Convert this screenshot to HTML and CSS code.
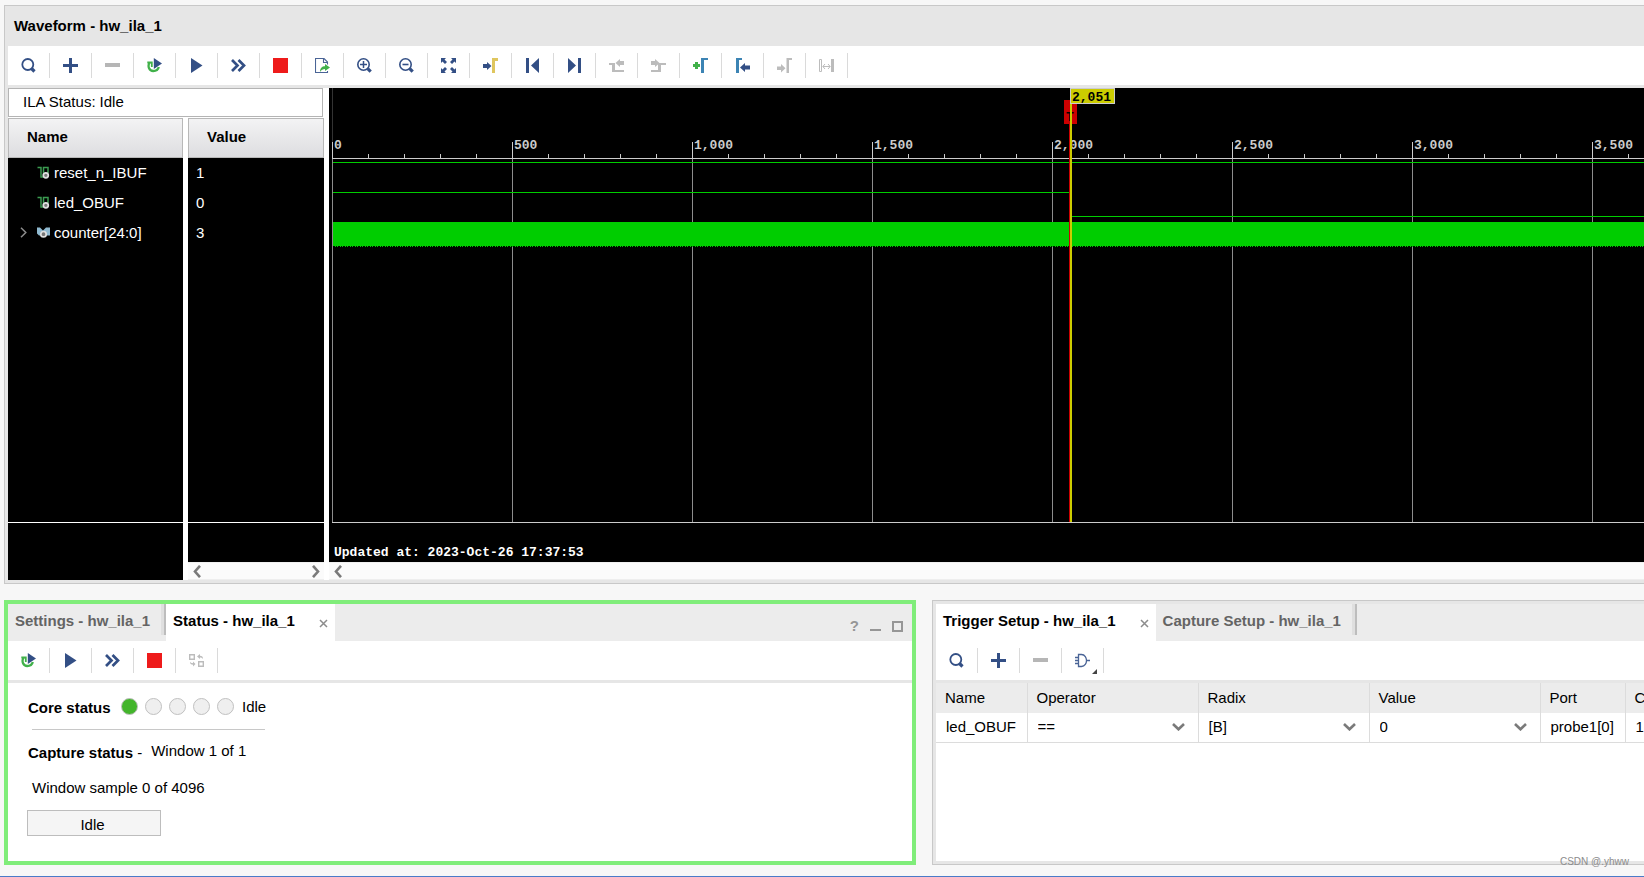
FILE: index.html
```html
<!DOCTYPE html>
<html lang="en">
<head>
<meta charset="utf-8">
<title>Hardware Manager - hw_ila_1</title>
<link rel="stylesheet" href="styles.css">
</head>
<body>
<svg class="defs" aria-hidden="true">
  <symbol id="i-search" viewBox="0 0 15 15"><circle cx="6.8" cy="6.5" r="5.5" fill="none" stroke="#334f85" stroke-width="1.8"/><path d="M10.5 10.5l3 3" stroke="#334f85" stroke-width="3.2"/></symbol>
  <symbol id="i-plus" viewBox="0 0 15 15"><path d="M0 6h15v3H0zM6 0h3v15H6z" fill="#334f85"/></symbol>
  <symbol id="i-minus" viewBox="0 0 15 15"><path d="M0 5h15v4H0z" fill="#b6b6b6"/></symbol>
  <symbol id="i-rerun" viewBox="0 0 15 15"><path d="M2.500 4.500C0.300 8.500 2.300 13 6.200 13c3 0 5-1.500 5.600-4" fill="none" stroke="#41b14a" stroke-width="2.300"/><path d="M0.300 4.500H4.800V9" fill="none" stroke="#41b14a" stroke-width="1.800"/><path d="M6.800 0L15 5.500L6.800 11z" fill="#334f85"/></symbol>
  <symbol id="i-play" viewBox="0 0 15 15"><path d="M2 0L13.500 7.500L2 15z" fill="#334f85"/></symbol>
  <symbol id="i-ff" viewBox="0 0 15 15"><path d="M1 2l5.500 5.500L1 13M7.500 2L13 7.500L7.500 13" fill="none" stroke="#334f85" stroke-width="2.700"/></symbol>
  <symbol id="i-stop" viewBox="0 0 15 15"><path d="M0 0h15v15H0z" fill="#ee1b1b"/></symbol>
  <symbol id="i-export" viewBox="0 0 15 15"><path d="M12.500 6.500V4L9 .5H.5V14.500H12.500V13M8.500 .5V4.500H12.500" fill="none" stroke="#4a6496" stroke-width="1.100"/><path d="M5 14c0-4 2-5.800 5-5.800V6L15 9.500L10 13V11c-2 0-3.500.7-5 3z" fill="#41b14a"/></symbol>
  <symbol id="i-zin" viewBox="0 0 15 15"><circle cx="6.500" cy="6.500" r="5.700" fill="none" stroke="#334f85" stroke-width="1.600"/><path d="M3 6.500h7M6.500 3v7" stroke="#334f85" stroke-width="1.500"/><path d="M10.700 10.700l3 3" stroke="#334f85" stroke-width="3.200"/></symbol>
  <symbol id="i-zout" viewBox="0 0 15 15"><circle cx="6.500" cy="6.500" r="5.700" fill="none" stroke="#334f85" stroke-width="1.600"/><path d="M3.500 6.500h6" stroke="#334f85" stroke-width="1.600"/><path d="M10.700 10.700l3 3" stroke="#334f85" stroke-width="3.200"/></symbol>
  <symbol id="i-fit" viewBox="0 0 15 15"><path d="M0 0h5L3.500 1.500L6 4L4 6L1.500 3.500L0 5zM15 0h-5l1.500 1.500L9 4l2 2l2.500-2.500L15 5zM0 15h5l-1.500-1.500L6 11L4 9l-2.500 2.500L0 10zM15 15h-5l1.500-1.500L9 11l2-2l2.500 2.500L15 10z" fill="#334f85"/></symbol>
  <symbol id="i-tocursor" viewBox="0 0 15 15"><path d="M9 0h6v3h-3v12H9z" fill="#dfc65e"/><path d="M0 6h4V4l4.500 4L4 12v-2H0z" fill="#334f85"/></symbol>
  <symbol id="i-first" viewBox="0 0 15 15"><path d="M1 0h3v15H1zM14 0v15L6 7.500z" fill="#334f85"/></symbol>
  <symbol id="i-last" viewBox="0 0 15 15"><path d="M11 0h3v15h-3zM1 0v15l8-7.500z" fill="#334f85"/></symbol>
  <symbol id="i-prevtr" viewBox="0 0 15 15"><path d="M0 5h6v7h9v2H3V7H0zM6.500 5l4.500-4v2h4v4h-4v2z" fill="#bcbcbc"/></symbol>
  <symbol id="i-nexttr" viewBox="0 0 15 15"><path d="M15 5H8.500L4 1v2H0v4h4v2l3-2.600V12H0v2h10V7h5z" fill="#bcbcbc"/></symbol>
  <symbol id="i-addmark" viewBox="0 0 15 15"><path d="M8 0h7v2h-4v13H8z" fill="#3c84b4"/><path d="M0 6h7v3H0zM2 4h3v7H2z" fill="#41b14a"/></symbol>
  <symbol id="i-prevmark" viewBox="0 0 15 15"><path d="M1 0h6v2H4v13H1z" fill="#3c84b4"/><path d="M5 9.500L10 5v2.500h5v4h-5V14z" fill="#334f85"/></symbol>
  <symbol id="i-nextmark" viewBox="0 0 15 15"><path d="M9.500 0H15v2h-3v13H9.500zM0 8.500h4V6l4.500 4.300L4 14.500V12H0z" fill="#bcbcbc"/></symbol>
  <symbol id="i-span" viewBox="0 0 15 15"><path d="M.5 1.500h2v12h-2zM4 8.500h7M6 6L3.800 8.500L6 11M9 6l2.200 2.500L9 11" fill="none" stroke="#bcbcbc"/><path d="M12 1h3v13h-3z" fill="#bcbcbc"/></symbol>
  <symbol id="i-swap" viewBox="0 0 15 15"><path d="M.7 1.700h4.600v4.600H.7zM9.700 8.700h4.600v4.600H9.700z" fill="none" stroke="#bcbcbc" stroke-width="1.400"/><path d="M8 3.500L11 1v1.700c2 0 3 1 3 3.300c-1-1.300-2-1.500-3-1.500V6zM6.500 11L4 13.500v-1.700C2 11.800 1 11 1 8.800c1 1.200 2 1.400 3 1.400V8.500z" fill="#bcbcbc"/></symbol>
  <symbol id="i-gate" viewBox="0 0 15 15"><path d="M3.500 1.500h3c3.500 0 5 3.500 5 6s-1.500 6-5 6h-3zM0 4.500h3M0 7.500h3M0 10.500h3M11.500 7.500H15" fill="none" stroke="#4a6496" stroke-width="1.300"/></symbol>
  <symbol id="i-signal" viewBox="0 0 12 13"><path d="M0 1.500h3.500V11H6V1.500h4.500V7" fill="none" stroke="#3b9a50" stroke-width="1.500"/><circle cx="8.300" cy="9.300" r="2.500" fill="#777" stroke="#e0e0e0" stroke-width="1.700"/></symbol>
  <symbol id="i-bus" viewBox="0 0 13 12"><path d="M0 1h3l3 3l3-3h4v8H2L0 7z" fill="#8fb9d0"/><circle cx="6.500" cy="7.700" r="2.700" fill="#777" stroke="#e0e0e0" stroke-width="1.700"/></symbol>
  <symbol id="i-left" viewBox="0 0 8 13"><path d="M7 .8L2 6.500L7 12.200" fill="none" stroke="#7a7a7a" stroke-width="2.600"/></symbol>
  <symbol id="i-right" viewBox="0 0 8 13"><path d="M1 .8L6 6.500L1 12.200" fill="none" stroke="#7a7a7a" stroke-width="2.600"/></symbol>
  <symbol id="i-down" viewBox="0 0 13 8"><path d="M1 1l5.500 5.300L12 1" fill="none" stroke="#7a7a7a" stroke-width="2.600"/></symbol>
  <symbol id="i-expand" viewBox="0 0 7 11"><path d="M1 .7L5.800 5.500L1 10.300" fill="none" stroke="#8c8c8c" stroke-width="1.500"/></symbol>
  <symbol id="i-close" viewBox="0 0 9 9"><path d="M1 1l7 7M8 1L1 8" stroke="#8c8c8c" stroke-width="1.500"/></symbol>
  <symbol id="i-min" viewBox="0 0 11 11"><path d="M0 8h11v2H0z" fill="#969696"/></symbol>
  <symbol id="i-max" viewBox="0 0 11 11"><path d="M1 1h9v9H1z" fill="none" stroke="#969696" stroke-width="2"/></symbol>
  <symbol id="i-menu" viewBox="0 0 5 5"><path d="M5 0v5H0z" fill="#444"/></symbol>
</svg>

<main class="workspace">
  <section class="panel waveform">
    <h1 class="panel-title">Waveform - hw_ila_1</h1>
    <div class="toolbar" role="toolbar" aria-label="Waveform tools">
      <button class="tool" aria-label="Search"><svg class="icon"><use href="#i-search"/></svg></button>
      <button class="tool" aria-label="Add probe"><svg class="icon"><use href="#i-plus"/></svg></button>
      <button class="tool" aria-label="Remove"><svg class="icon"><use href="#i-minus"/></svg></button>
      <button class="tool" aria-label="Auto re-trigger"><svg class="icon"><use href="#i-rerun"/></svg></button>
      <button class="tool" aria-label="Run trigger"><svg class="icon"><use href="#i-play"/></svg></button>
      <button class="tool" aria-label="Run trigger immediate"><svg class="icon"><use href="#i-ff"/></svg></button>
      <button class="tool" aria-label="Stop trigger"><svg class="icon"><use href="#i-stop"/></svg></button>
      <button class="tool" aria-label="Export data"><svg class="icon"><use href="#i-export"/></svg></button>
      <button class="tool" aria-label="Zoom in"><svg class="icon"><use href="#i-zin"/></svg></button>
      <button class="tool" aria-label="Zoom out"><svg class="icon"><use href="#i-zout"/></svg></button>
      <button class="tool" aria-label="Zoom fit"><svg class="icon"><use href="#i-fit"/></svg></button>
      <button class="tool" aria-label="Go to cursor"><svg class="icon"><use href="#i-tocursor"/></svg></button>
      <button class="tool" aria-label="Go to start"><svg class="icon"><use href="#i-first"/></svg></button>
      <button class="tool" aria-label="Go to end"><svg class="icon"><use href="#i-last"/></svg></button>
      <button class="tool" aria-label="Previous transition"><svg class="icon"><use href="#i-prevtr"/></svg></button>
      <button class="tool" aria-label="Next transition"><svg class="icon"><use href="#i-nexttr"/></svg></button>
      <button class="tool" aria-label="Add marker"><svg class="icon"><use href="#i-addmark"/></svg></button>
      <button class="tool" aria-label="Previous marker"><svg class="icon"><use href="#i-prevmark"/></svg></button>
      <button class="tool" aria-label="Next marker"><svg class="icon"><use href="#i-nextmark"/></svg></button>
      <button class="tool" aria-label="Swap cursors"><svg class="icon"><use href="#i-span"/></svg></button>
    </div>

    <div class="wave-body">
      <div class="signals">
        <div class="ila-status"><span>ILA Status:</span><span>Idle</span></div>
        <div class="columns">
          <div class="column names">
            <h2 class="column-head">Name</h2>
            <ul class="signal-list">
              <li class="signal"><svg class="sig-icon"><use href="#i-signal"/></svg>reset_n_IBUF</li>
              <li class="signal"><svg class="sig-icon"><use href="#i-signal"/></svg>led_OBUF</li>
              <li class="signal expandable"><button class="expander" aria-label="Expand counter"><svg class="chev"><use href="#i-expand"/></svg></button><svg class="sig-icon"><use href="#i-bus"/></svg>counter[24:0]</li>
            </ul>
            <div class="column-foot"></div>
          </div>
          <div class="column values">
            <h2 class="column-head">Value</h2>
            <ul class="signal-list">
              <li class="signal">1</li>
              <li class="signal">0</li>
              <li class="signal">3</li>
            </ul>
            <div class="column-foot"></div>
            <div class="scrollbar">
              <button class="scroll-btn" aria-label="Scroll left"><svg class="scroll-icon"><use href="#i-left"/></svg></button>
              <button class="scroll-btn" aria-label="Scroll right"><svg class="scroll-icon"><use href="#i-right"/></svg></button>
            </div>
          </div>
        </div>
      </div>

      <div class="plot">
        <svg class="plot-canvas" role="img" aria-label="Captured waveforms">
          <defs>
            <pattern id="minor" x="3" y="66" width="36" height="5" patternUnits="userSpaceOnUse"><path d="M0 0h1v5H0z" fill="#ccc"/></pattern>
            <pattern id="major" x="3" y="54" width="180" height="380" patternUnits="userSpaceOnUse"><path d="M0 0h1v17H0z" fill="#ccc"/><path d="M0 17h1v363H0z" fill="#8c8c8c"/></pattern>
            <pattern id="dots" x="3" y="158" width="5" height="1" patternUnits="userSpaceOnUse"><path d="M0 0h1v1H0zM3 0h1v1H3z" fill="#00cd00"/></pattern>
          </defs>
          <rect x="3" width="1" height="54" fill="#333"/>
          <rect x="3" y="54" width="5000" height="380" fill="url(#major)"/>
          <rect x="3" y="66" width="5000" height="4" fill="url(#minor)"/>
          <rect x="3" y="70" width="5000" height="1" fill="#ccc"/>
          <rect x="3" y="434" width="5000" height="1" fill="#ccc"/>
          <g class="ruler">
            <text x="5" y="61">0</text>
            <text x="185" y="61">500</text>
            <text x="365" y="61">1,000</text>
            <text x="545" y="61">1,500</text>
            <text x="725" y="61">2,000</text>
            <text x="905" y="61">2,500</text>
            <text x="1085" y="61">3,000</text>
            <text x="1265" y="61">3,500</text>
          </g>
          <g fill="#00cd00">
            <rect x="4" y="74" width="5000" height="1"/>
            <rect x="4" y="104" width="737" height="1"/>
            <rect x="741" y="128" width="5000" height="1"/>
            <rect x="4" y="134" width="5000" height="24"/>
          </g>
          <rect x="4" y="158" width="5000" height="1" fill="#000"/>
          <rect x="4" y="158" width="5000" height="1" fill="url(#dots)"/>
          <rect x="735" y="12" width="13" height="24" fill="#c00"/>
          <text class="marker" x="737" y="33">T</text>
          <rect x="740" y="36" width="1" height="398" fill="#c00"/>
          <rect x="741" y="16" width="2" height="418" fill="#cc0"/>
          <rect x="741.500" y=".5" width="44" height="15" fill="#cc0" stroke="#ccc"/>
          <text class="marker" x="743" y="13">2,051</text>
          <text class="stamp" x="5" y="468">Updated at: 2023-Oct-26 17:37:53</text>
        </svg>
        <div class="scrollbar">
          <button class="scroll-btn" aria-label="Scroll left"><svg class="scroll-icon"><use href="#i-left"/></svg></button>
        </div>
      </div>
    </div>
  </section>

  <div class="lower">
    <section class="dock focused">
      <div class="tabs" role="tablist">
        <button class="tab" role="tab" aria-selected="false">Settings - hw_ila_1</button>
        <div class="tab-divider"></div>
        <div class="tab active"><button class="tab-label" role="tab" aria-selected="true">Status - hw_ila_1</button><button class="close" aria-label="Close tab"><svg class="close-icon"><use href="#i-close"/></svg></button></div>
        <div class="window-controls">
          <button class="control" aria-label="Help">?</button>
          <button class="control" aria-label="Minimize"><svg class="control-icon"><use href="#i-min"/></svg></button>
          <button class="control" aria-label="Maximize"><svg class="control-icon"><use href="#i-max"/></svg></button>
        </div>
      </div>
      <div class="toolbar ruled" role="toolbar" aria-label="Status tools">
        <button class="tool" aria-label="Auto re-trigger"><svg class="icon"><use href="#i-rerun"/></svg></button>
        <button class="tool" aria-label="Run trigger"><svg class="icon"><use href="#i-play"/></svg></button>
        <button class="tool" aria-label="Run trigger immediate"><svg class="icon"><use href="#i-ff"/></svg></button>
        <button class="tool" aria-label="Stop trigger"><svg class="icon"><use href="#i-stop"/></svg></button>
        <button class="tool" aria-label="Swap"><svg class="icon"><use href="#i-swap"/></svg></button>
      </div>
      <div class="status">
        <div class="core">
          <strong class="core-label">Core status</strong>
          <span class="lamps"><i class="lamp on"></i><i class="lamp"></i><i class="lamp"></i><i class="lamp"></i><i class="lamp"></i></span>
          <span>Idle</span>
        </div>
        <div class="capture">
          <span class="capture-label"><strong>Capture status</strong> -</span>
          <span>Window 1 of 1</span>
        </div>
        <p class="sample">Window sample 0 of 4096</p>
        <div class="progress" role="progressbar" aria-label="Capture progress">Idle</div>
      </div>
    </section>

    <section class="dock trigger">
      <div class="tabs" role="tablist">
        <div class="tab active"><button class="tab-label" role="tab" aria-selected="true">Trigger Setup - hw_ila_1</button><button class="close" aria-label="Close tab"><svg class="close-icon"><use href="#i-close"/></svg></button></div>
        <button class="tab" role="tab" aria-selected="false">Capture Setup - hw_ila_1</button>
        <div class="tab-divider"></div>
      </div>
      <div class="toolbar ruled" role="toolbar" aria-label="Trigger tools">
        <button class="tool" aria-label="Search"><svg class="icon"><use href="#i-search"/></svg></button>
        <button class="tool" aria-label="Add probe"><svg class="icon"><use href="#i-plus"/></svg></button>
        <button class="tool" aria-label="Remove probe"><svg class="icon"><use href="#i-minus"/></svg></button>
        <button class="tool has-menu" aria-label="Trigger condition"><svg class="icon"><use href="#i-gate"/></svg><svg class="menu-mark"><use href="#i-menu"/></svg></button>
      </div>
      <table class="probes">
        <colgroup><col class="c-name"><col class="c-wide"><col class="c-wide"><col class="c-wide"><col class="c-port"><col class="c-comp"></colgroup>
        <thead><tr><th>Name</th><th>Operator</th><th>Radix</th><th>Value</th><th>Port</th><th>C</th></tr></thead>
        <tbody><tr>
          <td>led_OBUF</td>
          <td><div class="combo"><select class="combo-select" aria-label="Operator"><option>==</option></select><svg class="combo-icon"><use href="#i-down"/></svg></div></td>
          <td><div class="combo"><select class="combo-select" aria-label="Radix"><option>[B]</option></select><svg class="combo-icon"><use href="#i-down"/></svg></div></td>
          <td><div class="combo"><select class="combo-select" aria-label="Value"><option>0</option></select><svg class="combo-icon"><use href="#i-down"/></svg></div></td>
          <td>probe1[0]</td>
          <td>1</td>
        </tr></tbody>
      </table>
    </section>
  </div>
</main>
<div class="credit">CSDN @.yhww</div>
</body>
</html>
```
FILE: styles.css
```css
* { box-sizing: border-box; }

body {
  margin: 0;
  background: #f7f7f7;
  color: #000;
  font: 15px/20px "Liberation Sans", Arial, sans-serif;
}

button, select {
  margin: 0;
  padding: 0;
  border: 0;
  background: none;
  color: inherit;
  font: inherit;
}

h1, h2, ul, p { margin: 0; padding: 0; font-size: 15px; }
ul { list-style: none; }
.defs { position: absolute; width: 0; height: 0; }

.workspace {
  display: flex;
  flex-direction: column;
  gap: 16px;
  min-height: 100vh;
  padding: 5px 0 11px 4px;
  border-bottom: 1px solid #4a7bc8;
  overflow: hidden;
}

/* Waveform panel */
.panel {
  padding: 0 0 3px 3px;
  background: #e6e6e6;
  border: 1px solid #c8c8c8;
  border-right: 0;
}
.panel-title { padding: 10px 6px; }

.toolbar {
  display: flex;
  padding: 7px 0;
  background: #fff;
}
.toolbar.ruled { border-bottom: 3px solid #e6e6e6; }
.tool {
  display: flex;
  align-items: center;
  justify-content: center;
  flex: none;
  width: 42px;
  height: 25px;
  border-right: 1px solid #dadada;
}
.icon { width: 15px; height: 15px; }
.has-menu { position: relative; }
.menu-mark {
  position: absolute;
  right: 6px;
  bottom: -1px;
  width: 5px;
  height: 5px;
}

.wave-body {
  display: flex;
  gap: 5px;
  margin-top: 3px;
  background: #fff;
}
.signals { display: flex; flex-direction: column; gap: 1px; width: 316px; flex: none; }
.ila-status {
  display: flex;
  gap: 4px;
  margin-right: 1px;
  padding: 3px 14px 4px;
  border: 1px solid #b4b4b4;
}
.columns { display: flex; gap: 5px; flex: 1; }
.column { display: flex; flex-direction: column; background: #000; color: #fff; }
.names { width: 175px; }
.values { flex: 1; }
.column-head {
  height: 40px;
  padding: 8px 18px;
  border: 1px solid #b8b8b8;
  background: linear-gradient(#f3f3f4, #dddde0);
  color: #000;
}
.signal-list { height: 364px; }
.signal { display: flex; align-items: center; gap: 4px; height: 30px; padding-bottom: 1px; }
.names .signal { padding-left: 29px; }
.names .expandable { padding-left: 12px; }
.values .signal { padding-left: 8px; }
.sig-icon { width: 13px; height: 13px; }
.expander { display: flex; width: 13px; }
.chev { width: 7px; height: 11px; }
.column-foot { flex: 1; border-top: 1px solid #fff; }

.scrollbar {
  display: flex;
  justify-content: space-between;
  align-items: center;
  height: 18px;
  padding: 0 4px 0 5px;
  border-bottom: 1px solid #eee;
  border-top: 1px solid #f0f0f0;
  background: #fbfbfb;
}
.scroll-btn { display: flex; }
.scroll-icon { width: 8px; height: 13px; }

.plot { flex: 1; min-width: 0; }
.plot-canvas { display: block; width: 100%; height: 474px; background: #000; }
.plot-canvas text { font: bold 13px "Liberation Mono", "Courier New", monospace; }
.plot-canvas .ruler { fill: #ccc; }
.plot-canvas .marker { fill: #000; }
.plot-canvas .stamp { fill: #fff; }

/* Lower docks */
.lower {
  display: grid;
  grid-template-columns: minmax(0, 912fr) minmax(0, 712fr);
  gap: 16px;
  flex: 1;
}
.dock { background: #fff; overflow: hidden; }
.focused { border: 4px solid #80ed7a; }
.trigger {
  border: 1px solid #c8c8c8;
  border-right: 0;
  box-shadow: inset 3px 3px 0 #e6e6e6, inset 0 -3px 0 #e6e6e6;
  padding: 3px 0 3px 3px;
}
.tabs { display: flex; height: 37px; background: #ececec; }
.tab {
  display: flex;
  align-items: center;
  padding: 0 11px 4px 7px;
  color: #646464;
  font-weight: bold;
  white-space: nowrap;
}
.tab.active { gap: 24px; padding-right: 7px; background: #fff; color: #000; }
.close { display: flex; padding-top: 5px; }
.close-icon { width: 9px; height: 9px; }
.tab-divider { width: 5px; height: 31px; background: #dfdfdf; border-right: 2px solid #bdbdbd; }
.window-controls {
  display: flex;
  align-items: center;
  gap: 11px;
  margin-left: auto;
  padding: 7px 9px 0 0;
  color: #969696;
  font-weight: bold;
}
.control { display: flex; }
.control-icon { width: 11px; height: 11px; }

.status { padding: 12px 19px; }
.core {
  display: flex;
  align-items: center;
  gap: 8px;
  padding-bottom: 11px;
}
.core-label { width: 86px; padding: 3px 0 0 1px; }
.lamps { display: flex; gap: 7px; }
.lamp { width: 17px; height: 17px; border: 1px solid #c0c0c0; border-radius: 50%; background: #efefef; }
.lamp.on { background: #43b52b; }
.capture {
  display: flex;
  gap: 9px;
  width: 233px;
  margin-left: 5px;
  padding-top: 11px;
  border-top: 1px solid #c8c8c8;
  white-space: nowrap;
}
.capture-label { margin: 2px 0 0 -4px; }
.sample { padding: 15px 5px 0; }
.progress {
  width: 134px;
  height: 26px;
  margin-top: 12px;
  padding: 4px 3px 0 0;
  border: 1px solid #bdbdbd;
  background: #f5f5f5;
  text-align: center;
}

.probes { width: 820px; border-collapse: collapse; table-layout: fixed; }
.c-name { width: 91px; }
.c-wide { width: 171px; }
.c-port { width: 85px; }
.probes th, .probes td {
  height: 30px;
  padding: 0 9px 1px;
  border-right: 1px solid #dcdcdc;
  font-weight: normal;
  text-align: left;
  white-space: nowrap;
}
.probes th { background: #ececec; }
.probes td { height: 29px; padding-left: 10px; border-bottom: 1px solid #dcdcdc; }
.combo { display: flex; align-items: center; }
.combo-select { flex: 1; height: 20px; appearance: none; }
.combo-icon { width: 13px; height: 8px; margin-right: 4px; pointer-events: none; }

.credit {
  position: absolute;
  right: 15px;
  bottom: 5px;
  color: #8c8c8c;
  font-size: 10px;
}
```
